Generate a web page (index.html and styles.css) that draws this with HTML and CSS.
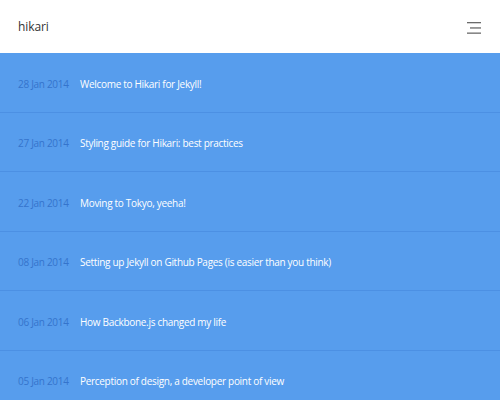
FILE: index.html
```html
<!DOCTYPE html>
<html>
<head>
<meta charset="utf-8">
<link rel="stylesheet" href="styles.css">
</head>
<body>
<header class="topbar">
  <div class="brand">hikari</div>
  <button class="menu" aria-label="menu">
    <svg width="16" height="14" viewBox="0 0 16 14">
      <rect x="1" y="2" width="14" height="1.3" fill="#6b6b6b"/>
      <rect x="4" y="7.3" width="11" height="1.3" fill="#6b6b6b"/>
      <rect x="1" y="12.5" width="14" height="1.3" fill="#6b6b6b"/>
    </svg>
  </button>
</header>
<ul class="posts">
  <li class="post"><span class="date">28 Jan 2014</span><span class="title">Welcome to Hikari for Jekyll!</span></li>
  <li class="post"><span class="date">27 Jan 2014</span><span class="title">Styling guide for Hikari: best practices</span></li>
  <li class="post"><span class="date">22 Jan 2014</span><span class="title">Moving to Tokyo, yeeha!</span></li>
  <li class="post"><span class="date">08 Jan 2014</span><span class="title">Setting up Jekyll on Github Pages (is easier than you think)</span></li>
  <li class="post"><span class="date">06 Jan 2014</span><span class="title">How Backbone.js changed my life</span></li>
  <li class="post"><span class="date">05 Jan 2014</span><span class="title">Perception of design, a developer point of view</span></li>
</ul>
</body>
</html>
```
FILE: styles.css
```css
html, body {
  margin: 0;
  padding: 0;
  height: 100%;
  overflow: hidden;
}
body {
  font-family: "Open Sans", "Liberation Sans", sans-serif;
  background: #579ded;
}
.topbar {
  height: 53px;
  background: #ffffff;
  display: flex;
  align-items: center;
  justify-content: space-between;
  padding: 0 18px;
  box-sizing: border-box;
}
.brand {
  font-size: 12px;
  letter-spacing: -0.1px;
  color: #333333;
  margin-top: -1px;
}
.menu {
  border: 0;
  background: none;
  padding: 0;
  width: 16px;
  height: 14px;
  display: block;
}
.menu svg { display: block; }
.posts {
  list-style: none;
  margin: 0;
  padding: 0;
}
.post {
  height: 56px;
  padding: 2px 18px 0;
  display: flex;
  align-items: center;
  border-bottom: 1px solid rgba(40, 100, 190, 0.22);
  font-size: 10px;
  letter-spacing: -0.3px;
  box-sizing: content-box;
}
.post:nth-child(odd) {
  height: 57px;
}
.date {
  width: 62px;
  color: #3574cc;
  flex: none;
}
.title {
  color: #ffffff;
}
```
